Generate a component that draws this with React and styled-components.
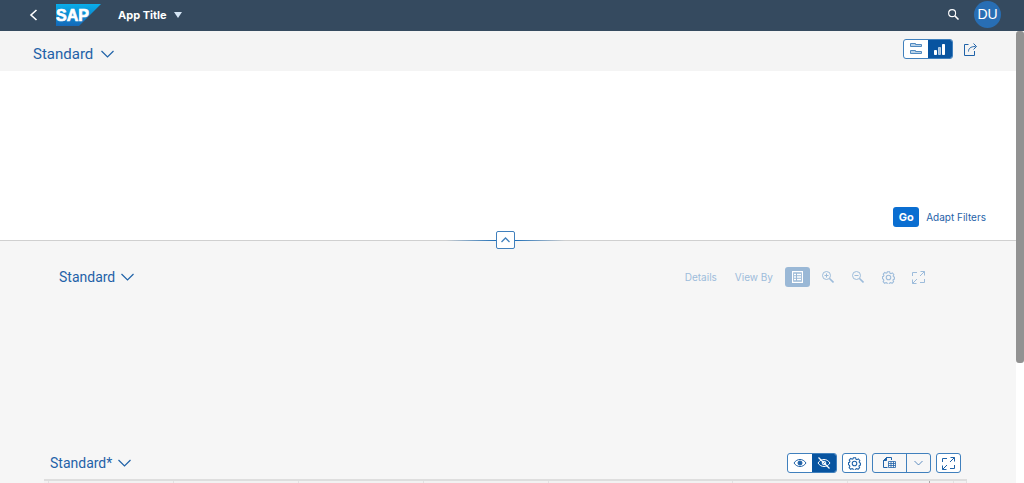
import React from "react";
import styled, { createGlobalStyle, css } from "styled-components";

const GlobalStyle = createGlobalStyle`
  *, *::before, *::after { box-sizing: border-box; }
  body { margin: 0; background: #f6f6f6; font-family: Roboto, "Open Sans", sans-serif; }
  button { font-family: inherit; margin: 0; padding: 0; border: 0; background: none; cursor: pointer; }
  svg { display: block; flex: none; }
`;

const Page = styled.div`
  display: flex;
  flex-direction: column;
  height: 100vh;
  overflow: hidden;
  color: #1f62a8;
`;

const ShellBar = styled.header`
  display: flex;
  align-items: center;
  flex: none;
  height: 31px;
  padding: 0 23px 2px 29px;
  background: #354a5f;
  color: #fff;
`;

const ShellButton = styled.button`
  display: flex;
  align-items: center;
  gap: 7px;
  color: #fff;
  font-family: Inter, sans-serif;
  font-size: 11px;
  line-height: 16px;
  font-weight: 700;
`;

const Logo = styled.a`
  margin: 0 17px 0 18px;
`;

const Avatar = styled.button`
  width: 27px;
  height: 27px;
  margin-left: 15px;
  border-radius: 50%;
  background: #286eb4;
  color: #fff;
  font-family: "Liberation Sans", Arial, sans-serif;
  font-size: 14px;
  line-height: 27px;
`;

const Spacer = styled.div`
  flex: 1;
`;

const Viewport = styled.div`
  display: flex;
  flex: 1;
  min-height: 0;
`;

const Content = styled.main`
  flex: 1;
  min-width: 0;
  overflow: hidden;
`;

const ScrollTrack = styled.div`
  flex: none;
  width: 8px;
  background: #fff;
`;

const ScrollThumb = styled.div`
  height: 332px;
  border-radius: 3px;
  background: #929292;
`;

const TitleBar = styled.div`
  display: flex;
  align-items: flex-start;
  height: 40px;
  padding: 8px 39px 0 33px;
  background: #f4f4f4;
`;

const VariantButton = styled.button`
  display: flex;
  align-items: center;
  gap: ${(p) => (p.$large ? 8 : 6)}px;
  color: #1f62a8;
  font-size: ${(p) => (p.$large ? 15 : 14)}px;
  line-height: 20px;
`;

const TitleVariant = styled.div`
  padding-top: 5px;
`;

const TitleActions = styled.div`
  display: flex;
  align-items: center;
  gap: 10px;
`;

const Segmented = styled.div`
  display: flex;
  overflow: hidden;
  height: 20px;
  border: 1px solid #4080bd;
  border-radius: 3px;
  background: #fff;
`;

const Segment = styled.button`
  display: grid;
  place-items: center;
  width: ${(p) => p.$width || 24}px;
  color: ${(p) => (p.$on ? "#fff" : "#1f62a8")};
  background: ${(p) => (p.$on ? "#0854a0" : "transparent")};
  ${(p) => p.$divided && css`border-left: 1px solid #4080bd;`}
`;

const SplitButton = styled(Segmented)`
  background: #f7f7f7;
`;

const IconButton = styled.button`
  display: grid;
  place-items: center;
  width: ${(p) => p.$width || 14}px;
  height: 20px;
  color: inherit;
  ${(p) => p.$outlined && css`
    border: 1px solid #4080bd;
    border-radius: 3px;
    background: #fff;
  `}
`;

const FilterBar = styled.section`
  display: flex;
  align-items: flex-end;
  justify-content: flex-end;
  gap: 7px;
  height: 170px;
  padding: 0 30px 13px;
  border-bottom: 1px solid #d0d0d0;
  background: #fff;
`;

const GoButton = styled.button`
  width: 26px;
  height: 20px;
  border-radius: 3px;
  background: #0a6ed1;
  color: #fff;
  font-family: Inter, sans-serif;
  font-size: 11px;
  font-weight: 700;
  line-height: 20px;
`;

const TextButton = styled.button`
  color: inherit;
  font-family: Inter, sans-serif;
  font-size: 10px;
  line-height: 20px;
`;

const Collapse = styled.div`
  position: relative;
  display: flex;
  align-items: center;
  justify-content: center;
  height: 18px;
  margin: -10px 5px -8px 0;
`;

const CollapseLine = styled.span`
  width: 50px;
  height: 1px;
  background: linear-gradient(to ${(p) => p.$to}, #1f6fb8, #1f6fb800);
`;

const CollapseButton = styled.button`
  display: grid;
  place-items: center;
  width: 19px;
  height: 18px;
  border: 1px solid #4080bd;
  border-radius: 2px;
  background: #fff;
  color: #4080bd;
`;

const ChartSection = styled.section`
  height: 186px;
  padding: 26px 91px 0 59px;
`;

const Toolbar = styled.div`
  display: flex;
  align-items: center;
  height: 20px;
`;

const ChartActions = styled.div`
  display: flex;
  align-items: center;
  gap: 16px;
  color: #9dbcdb;
`;

const ChartLabels = styled.div`
  display: flex;
  gap: 18px;
  margin-right: -4px;
`;

const LegendButton = styled.button`
  display: grid;
  place-items: center;
  width: 25px;
  height: 20px;
  margin-right: -5px;
  border-radius: 3px;
  background: #9ab8d6;
  color: #fff;
`;

const TableSection = styled.section`
  padding: 26px 49px 0 44px;
`;

const TableToolbar = styled(Toolbar)`
  padding: 0 6px;
  margin-bottom: 6px;
`;

const TableActions = styled.div`
  display: flex;
  align-items: center;
  gap: 5px;
`;

const Grid = styled.table`
  width: 100%;
  table-layout: fixed;
  border-collapse: collapse;
  border-top: 2px solid #dedede;
  background: #f2f2f2;
`;

const HeaderCell = styled.th`
  height: 24px;
  padding: 0;
  border-right: 1px solid ${(p) => (p.$frozen ? "#a8a8a8" : "#e2e2e2")};
`;

const Svg = ({ w = 12, h = 12, box = "0 0 12 12", children, sw = 1 }) => (
  <svg width={w} height={h} viewBox={box} fill="none" stroke="currentColor" strokeWidth={sw} aria-hidden="true">
    {children}
  </svg>
);

const ChevronDown = () => (
  <Svg w={13} h={8} box="0 0 13 8" sw={1.2}><path d="M.5 1 6.5 7l6-6" /></Svg>
);

const Gear = () => (
  <Svg w={13} h={13} box="0 0 16 16" sw={1.3}>
    <circle cx="8" cy="8" r="2.8" />
    <path d="M6.600 1h2.800l.5 1.800 1.100.4 1.700-.9 1.900 2-.9 1.700.4 1.100 1.400.4v2.400l-1.600.6-.4 1 .8 1.700-1.900 1.900-1.700-.9-1 .5-.5 1.700H6.600l-.5-1.700-1.100-.5-1.700.9-1.900-1.900.9-1.700-.5-1.100L.6 9.500V7l1.300-.5.5-1.100-.9-1.700 1.900-1.900 1.700.9 1.100-.5z" />
  </Svg>
);

const FullScreen = () => (
  <Svg w={13} h={13} box="0 0 13 13">
    <path d="M8.500.5h4v4M12.500.5 8 5M4.500 12.500h-4v-4M.5 12.500 5 8M.5 5V1.500H5M12.500 8v3.500H8" />
  </Svg>
);

const Zoom = ({ plus }) => (
  <Svg>
    <circle cx="4.5" cy="4.5" r="4" />
    <path d="M2.500 4.500h4" />
    {plus && <path d="M4.500 2.500v4" />}
    <path d="m7.500 7.500 4 4" strokeWidth="1.600" />
  </Svg>
);

const Eye = ({ off }) => (
  <Svg w={14} h={12} box="0 0 14 12">
    <path d="M1 6c3-4.700 9-4.700 12 0-3 4.700-9 4.700-12 0z" />
    <circle cx="7" cy="6" r={off ? 1.8 : 2} fill={off ? "none" : "currentColor"} />
    {off && <path d="m1.500.5 11 11" strokeWidth="1.300" />}
  </Svg>
);

const SapLogo = () => (
  <svg width="45" height="22" viewBox="0 0 45 22" role="img" aria-label="SAP">
    <defs>
      <linearGradient id="sap" x1="0" y1="0" x2="0" y2="1">
        <stop offset="0" stopColor="#08aeea" />
        <stop offset="1" stopColor="#1468b8" />
      </linearGradient>
    </defs>
    <path d="M0 0h45L23 22H0z" fill="url(#sap)" />
    <text x="0" y="17" fill="#fff" stroke="#fff" strokeWidth=".7" fontFamily="Liberation Sans, Arial, sans-serif" fontWeight="700" fontSize="16">SAP</text>
  </svg>
);

const columns = [
  { width: 5 },
  { width: 125 },
  { width: 125 },
  { width: 125 },
  { width: 125 },
  { width: 184 },
  { width: 115 },
  { width: 82, frozen: true },
  { width: 24 },
  { width: 13 },
];
const totalWidth = columns.reduce((sum, c) => sum + c.width, 0);

export default function App() {
  return (
    <Page>
      <GlobalStyle />
      <ShellBar>
        <ShellButton aria-label="Back">
          <Svg w={9} h={12} box="0 0 9 12" sw={1.6}><path d="M7.500 1 2 6l5.500 5" /></Svg>
        </ShellButton>
        <Logo href="#"><SapLogo /></Logo>
        <ShellButton>
          App Title
          <svg width="8" height="6" viewBox="0 0 8 6" aria-hidden="true"><path d="M0 0h8L4 6z" fill="#d5e6f5" /></svg>
        </ShellButton>
        <Spacer />
        <ShellButton aria-label="Search">
          <Svg w={11} h={11} sw={1.2}><circle cx="4.5" cy="4.5" r="3.8" /><path d="m7.500 7.500 4 4" strokeWidth="1.600" /></Svg>
        </ShellButton>
        <Avatar aria-label="User menu">DU</Avatar>
      </ShellBar>

      <Viewport>
        <Content>
          <TitleBar>
            <TitleVariant>
              <VariantButton $large>Standard<ChevronDown /></VariantButton>
            </TitleVariant>
            <Spacer />
            <TitleActions>
              <Segmented>
                <Segment aria-label="Filter view">
                  <Svg>
                    <path d="M.5 3.500v-3h5v1h6v2zM.5 10.500v-3h5v1h6v2z" fill="#b9d2e8" stroke="#4f89c0" />
                  </Svg>
                </Segment>
                <Segment $on aria-label="Chart view">
                  <Svg>
                    <path d="M.5 7.500h2v4h-2z" fill="#fff" />
                    <path d="M4.500 4.500h2v7h-2z" fill="#9dbcdb" stroke="#b5cde5" />
                    <path d="M8.500 1.500h2v10h-2z" fill="#fff" />
                  </Svg>
                </Segment>
              </Segmented>
              <IconButton aria-label="Share">
                <Svg w={13} h={13} box="0 0 13 13">
                  <path d="M4.500 1.500h-4v11h10V8M4.500 8.500c0-3 2-5 7-5M9.500.5l3 3-3 3" />
                </Svg>
              </IconButton>
            </TitleActions>
          </TitleBar>

          <FilterBar>
            <GoButton>Go</GoButton>
            <TextButton>Adapt Filters</TextButton>
          </FilterBar>

          <Collapse>
            <CollapseLine $to="left" />
            <CollapseButton aria-label="Collapse header">
              <Svg w={9} h={6} box="0 0 9 6" sw={1.3}><path d="m.5 5 4-4 4 4" /></Svg>
            </CollapseButton>
            <CollapseLine $to="right" />
          </Collapse>

          <ChartSection>
            <Toolbar>
              <VariantButton>Standard<ChevronDown /></VariantButton>
              <Spacer />
              <ChartActions>
                <ChartLabels>
                  <TextButton>Details</TextButton>
                  <TextButton>View By</TextButton>
                </ChartLabels>
                <LegendButton aria-label="Legend">
                  <Svg w={11} h={12} box="0 0 11 12">
                    <path d="M.5.5h10v11H.5zM2 3.500h2M2 6h2M2 8.500h2M5 3.500h4M5 6h4M5 8.500h4" strokeWidth="1.300" />
                  </Svg>
                </LegendButton>
                <IconButton aria-label="Zoom in"><Zoom plus /></IconButton>
                <IconButton aria-label="Zoom out"><Zoom /></IconButton>
                <IconButton aria-label="Settings"><Gear /></IconButton>
                <IconButton aria-label="Full screen"><FullScreen /></IconButton>
              </ChartActions>
            </Toolbar>
          </ChartSection>

          <TableSection>
            <TableToolbar>
              <VariantButton>Standard*<ChevronDown /></VariantButton>
              <Spacer />
              <TableActions>
                <Segmented>
                  <Segment aria-label="Show details"><Eye /></Segment>
                  <Segment $on aria-label="Hide details"><Eye off /></Segment>
                </Segmented>
                <IconButton $outlined $width={25} aria-label="Settings"><Gear /></IconButton>
                <SplitButton>
                  <Segment $width={33} aria-label="Export">
                    <Svg w={13} h={12} box="0 0 13 12">
                      <path d="M4.500 10.500h-4v-7l3-3h5V3" />
                      <path d="M.5 3.500h3v-3z" fill="currentColor" />
                      <path d="M5.500 4.500h7v6h-7zM5.500 6.500h7M5.500 8.500h7M8 4.500v6M10.500 4.500v6" strokeWidth=".8" />
                    </Svg>
                  </Segment>
                  <Segment $width={24} $divided aria-label="Export options">
                    <Svg w={9} h={6} box="0 0 9 6"><path d="m.5 1 4 4 4-4" opacity=".7" /></Svg>
                  </Segment>
                </SplitButton>
                <IconButton $outlined $width={25} aria-label="Full screen"><FullScreen /></IconButton>
              </TableActions>
            </TableToolbar>
            <Grid>
              <colgroup>
                {columns.map((c, i) => <col key={i} style={{ width: `${(c.width / totalWidth) * 100}%` }} />)}
              </colgroup>
              <thead>
                <tr>{columns.map((c, i) => <HeaderCell key={i} scope="col" $frozen={c.frozen} />)}</tr>
              </thead>
            </Grid>
          </TableSection>
        </Content>
        <ScrollTrack><ScrollThumb /></ScrollTrack>
      </Viewport>
    </Page>
  );
}
